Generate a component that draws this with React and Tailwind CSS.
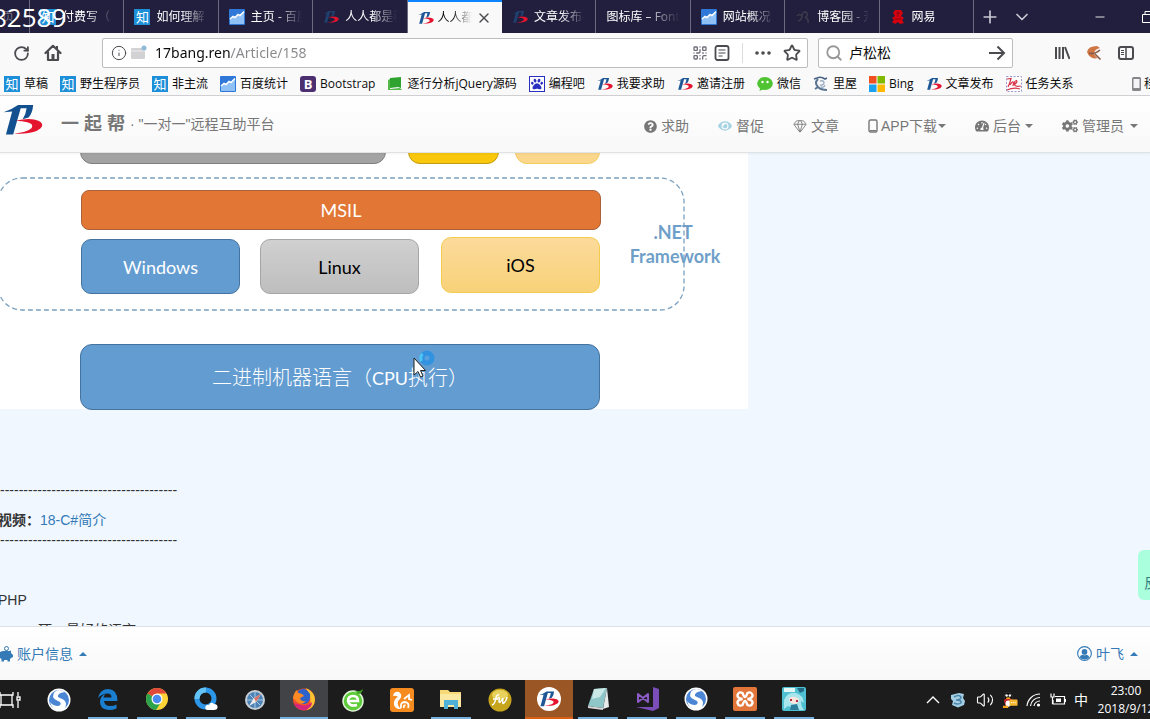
import React from "react";
import {
  RotateCw, Info, Search, ArrowRight, Star, QrCode, Plus, ChevronDown, ChevronUp,
  Minus, X, Smartphone, Gem, Copy, Volume2,
} from "lucide-react";
import {
  FaQuestionCircle, FaEye, FaTachometerAlt, FaCogs, FaPiggyBank, FaRegUserCircle, FaPaw,
} from "react-icons/fa";

/* ---------- site and bookmark icons ---------- */

function BangLogo({ className = "size-4", blue = "#1d5796" }) {
  return (
    <svg viewBox="0 0 122 96" className={className} aria-hidden="true">
      <path fill={blue} d="M2 24 Q26 16 46 2 H92 Q90 28 78 40 L60 46 Q70 30 72 12 H54 L31 92 H9 L28 22Z" />
      <path fill="#e4142f" d="M38 50 Q84 40 108 50 Q128 60 114 74 Q92 93 34 89 Q72 86 86 74 Q96 60 74 55 Q60 51 38 50Z" />
    </svg>
  );
}

function Zhihu() {
  return (
    <span className="flex size-4 shrink-0 items-center justify-center bg-[#1d8fd8] text-[13px] leading-4 text-white" aria-hidden="true">
      知
    </span>
  );
}

function Stats() {
  return (
    <svg viewBox="0 0 16 16" className="size-4 shrink-0" aria-hidden="true">
      <rect width="16" height="16" rx="1" fill="#2f78d8" />
      <path d="M1 10 L4 7.500 L6 8.500 L9 5.500 L11 6.500 L15 2.500 V15 H1Z" fill="#8fc0f5" />
      <path d="M1 10 L4 7.500 L6 8.500 L9 5.500 L11 6.500 L15 2.500" fill="none" stroke="#fff" strokeWidth="1.500" />
    </svg>
  );
}

function BootstrapIcon() {
  return (
    <span className="flex size-4 shrink-0 items-center justify-center rounded-[3px] bg-[#4b2f6f] text-[13px] leading-4 font-bold text-white" aria-hidden="true">
      B
    </span>
  );
}

function GreenBook() {
  return (
    <svg viewBox="0 0 16 16" className="size-4 shrink-0" aria-hidden="true">
      <path d="M3 2 L14 1 V12 L11 11 L3 12Z" fill="#2fa32f" />
      <path d="M1 4 L3 3 V13 L13 12 L15 14 L1 14Z" fill="#54b948" />
    </svg>
  );
}

function Baidu() {
  return (
    <span className="flex size-4 shrink-0 items-center justify-center border border-[#2b2fc0] bg-white text-[#2b2fc0]" aria-hidden="true">
      <FaPaw size={12} />
    </span>
  );
}

function Wechat() {
  return (
    <svg viewBox="0 0 16 16" className="size-4 shrink-0" aria-hidden="true">
      <ellipse cx="8" cy="7.500" rx="7.800" ry="6.500" fill="#4fc332" />
      <path d="M3 12 L2.500 15 L7 13Z" fill="#4fc332" />
      <circle cx="5.500" cy="6" r="1.200" fill="#fff" />
      <circle cx="10.500" cy="6" r="1.200" fill="#fff" />
    </svg>
  );
}

function Liwu() {
  return (
    <svg viewBox="0 0 16 16" className="size-4 shrink-0" fill="none" aria-hidden="true">
      <path d="M1 3 L4 2 Q8 0 12 3 L14 2" stroke="#4a6380" strokeWidth="1.600" />
      <path d="M5 3 Q1 7 5 11 Q8 14 14 14 M2 13 L5 11" stroke="#5a7492" strokeWidth="2" />
      <path d="M7 5 Q11 4 11 7 Q10 10 7 9 M8 11 Q11 12 12 9" stroke="#9db0c4" strokeWidth="1.400" />
    </svg>
  );
}

function Bing() {
  return (
    <svg viewBox="0 0 16 16" className="size-4 shrink-0" aria-hidden="true">
      <rect width="7.500" height="7.500" fill="#f0501f" />
      <rect x="8.500" width="7.500" height="7.500" fill="#7fba00" />
      <rect y="8.500" width="7.500" height="7.500" fill="#1ba1ee" />
      <rect x="8.500" y="8.500" width="7.500" height="7.500" fill="#ffb902" />
    </svg>
  );
}

function Relation() {
  return (
    <svg viewBox="0 0 16 16" className="size-4 shrink-0" aria-hidden="true">
      <rect x="0.500" y="0.500" width="15" height="15" fill="#fff" stroke="#9a9ad0" strokeDasharray="2 1.500" />
      <path d="M1 3 L5 2.500 Q4 7 2 11 M4 9 Q7 4 7.500 7 L7 10 M8 9 Q12 6 10.500 4.500 Q8 5 8.500 9 Q10 11 15 10 M1 14 Q8 11 14 13" fill="none" stroke="#d8364a" strokeWidth="1.200" />
    </svg>
  );
}

function Cnblogs() {
  return (
    <svg viewBox="0 0 16 16" className="size-4 shrink-0" aria-hidden="true">
      <path d="M2 7 Q5 4 7 7 Q7 11 3 12 M7 6 Q9 1 12 4 Q13 8 10 8 Q14 10 13 14" fill="none" stroke="#3d3a4c" strokeWidth="1.600" />
    </svg>
  );
}

function Netease() {
  return (
    <svg viewBox="0 0 16 16" className="size-4 shrink-0" aria-hidden="true">
      <path d="M5 1 H11 L13 4 L11 7 L14 9 L12 11 L14 14 L10 15 L8 13 L5 15 L2 13 L4 11 L2 9 L5 7 L3 4Z" fill="#d7000f" />
      <path d="M6 4 H10 M5 10 H11 M8 2 V8" stroke="#8c0611" fill="none" />
    </svg>
  );
}

const Caret = ({ up = false }) => (
  <svg viewBox="0 0 8 4" className="h-1 w-2 shrink-0" fill="currentColor" aria-hidden="true">
    <path d={up ? "M0 4 L4 0 L8 4Z" : "M0 0 H8 L4 4Z"} />
  </svg>
);

/* ---------- browser chrome ---------- */

const tabs = [
  { icon: <Zhihu />, title: "付费写（" },
  { icon: <Zhihu />, title: "如何理解" },
  { icon: <Stats />, title: "主页 - 百度" },
  { icon: <BangLogo blue="#20406f" />, title: "人人都是程序" },
  { icon: <BangLogo />, title: "人人都是", active: true },
  { icon: <BangLogo blue="#20406f" />, title: "文章发布-一" },
  { icon: null, title: "图标库 – Font A" },
  { icon: <Stats />, title: "网站概况" },
  { icon: <Cnblogs />, title: "博客园 - 开发" },
  { icon: <Netease />, title: "网易" },
];

function TabBar() {
  return (
    <div className="relative flex h-[33px] shrink-0 items-stretch bg-[#211f3d] text-xs text-white">
      <button className="w-[30px] shrink-0 border-r border-[#6b6a80] pl-0.5 text-left text-[#77768a]">页</button>
      <div role="tablist" className="grid w-[944px] shrink-0 grid-cols-10">
        {tabs.map((t, i) =>
          t.active ? (
            <div key={i} className="flex items-center gap-1 border-t-2 border-[#0a84ff] bg-[#f9f9fa] pr-2.5 pl-2.5 text-[#0c0c0d]">
              <button role="tab" aria-selected="true" className="flex min-w-0 flex-1 items-center gap-1">
                <span className="shrink-0">{t.icon}</span>
                <span className="overflow-hidden whitespace-nowrap [mask-image:linear-gradient(90deg,#000_40%,transparent)]">{t.title}</span>
              </button>
              <button aria-label="关闭标签页"><X size={16} strokeWidth={2} className="text-[#4a4a4f]" /></button>
            </div>
          ) : (
            <button key={i} role="tab" aria-selected="false" className="flex min-w-0 items-center gap-1.5 border-r border-[#6b6a80] pr-2.5 pl-2.5">
              {t.icon && <span className="shrink-0">{t.icon}</span>}
              <span className="flex-1 overflow-hidden text-left whitespace-nowrap [mask-image:linear-gradient(90deg,#000_50%,transparent)]">{t.title}</span>
            </button>
          )
        )}
      </div>
      <button aria-label="新标签页" className="flex w-8 shrink-0 items-center justify-center text-[#c9c8d4]"><Plus size={20} strokeWidth={2} /></button>
      <button aria-label="所有标签页" className="flex w-8 shrink-0 items-center justify-center text-[#c9c8d4]"><ChevronDown size={20} /></button>
      <span className="flex-1" />
      <button aria-label="最小化" className="flex w-10 shrink-0 items-center justify-center"><Minus size={14} strokeWidth={1.500} /></button>
      <button aria-label="还原" className="flex w-[30px] shrink-0 items-center justify-end overflow-hidden">
        <svg viewBox="0 0 12 12" className="-mr-1 size-3 shrink-0" fill="none" stroke="currentColor" aria-hidden="true">
          <path d="M0.500 3.500 H8.500 V11.500 H0.500Z M3 3.500 V0.500 H11.500 V9 H8.500" />
        </svg>
      </button>
      <span className="absolute top-0 -left-2 font-['Open_Sans'] text-[26px] leading-[34px]">82589</span>
    </div>
  );
}

function Toolbar() {
  return (
    <div className="flex h-10 shrink-0 items-center bg-[#f9f9fa] text-[#4a4a4f]">
      <button aria-label="刷新" className="ml-[11px] flex size-5 items-center justify-center"><RotateCw size={17} strokeWidth={2.500} /></button>
      <button aria-label="主页" className="ml-3 flex size-5 items-center justify-center">
        <svg viewBox="0 0 18 18" className="size-[18px]" aria-hidden="true">
          <path d="M1.500 9 L9 1.800 L16.500 9 M4 8 V16 H14 V8" fill="none" stroke="currentColor" strokeWidth="2.200" strokeLinejoin="round" strokeLinecap="round" />
          <rect x="7.500" y="10" width="3" height="6" fill="currentColor" />
          <rect x="12" y="2" width="2" height="4" fill="currentColor" />
        </svg>
      </button>
      <div className="ml-[39px] flex h-[30px] min-w-0 flex-1 items-center rounded-xs border border-[#bdbdbf] bg-white pl-2">
        <Info size={16} strokeWidth={1.500} className="shrink-0" />
        <svg viewBox="0 0 16 16" className="ml-1 size-4 shrink-0" aria-hidden="true">
          <rect y="3" width="14" height="11" rx="1" fill="#d2d2d4" />
          <path d="M0 6 H14" stroke="#ececee" />
          <circle cx="13" cy="3" r="2.500" fill="#8dbbd8" />
        </svg>
        <input
          aria-label="地址"
          defaultValue="17bang.ren/Article/158"
          className="ml-2 min-w-0 flex-1 bg-[linear-gradient(90deg,#0c0c0d_75px,#88888b_75px)] bg-clip-text font-['Noto_Sans',sans-serif] text-sm text-transparent outline-none"
        />
        <QrCode size={16} strokeWidth={2} className="shrink-0 text-[#6e6e78]" />
        <svg viewBox="0 0 16 16" className="mx-1.5 size-4 shrink-0" fill="none" stroke="currentColor" aria-hidden="true">
          <rect x="1.500" y="1" width="13" height="14" rx="2" strokeWidth="1.800" />
          <path d="M4.500 5 H11.500 M4.500 8 H11.500 M4.500 11 H8.500" strokeWidth="1.200" />
        </svg>
        <span className="mx-1.5 h-5 w-px bg-[#dcdcde]" />
        <button aria-label="页面操作" className="mx-1.5 flex">
          <svg viewBox="0 0 16 16" className="size-4" fill="currentColor" aria-hidden="true">
            <circle cx="2" cy="8" r="1.800" /><circle cx="8" cy="8" r="1.800" /><circle cx="14" cy="8" r="1.800" />
          </svg>
        </button>
        <button aria-label="收藏" className="mr-1.5 ml-1.5 flex"><Star size={18} strokeWidth={2.400} strokeLinejoin="miter" /></button>
      </div>
      <div className="ml-2.5 flex h-[30px] w-[195px] shrink-0 items-center rounded-xs border border-[#bdbdbf] bg-white px-1.5">
        <Search size={18} strokeWidth={2.400} className="shrink-0 text-[#98989b]" />
        <input aria-label="搜索" defaultValue="卢松松" className="ml-1.5 w-full min-w-0 text-sm text-[#0c0c0d] outline-none" />
        <button aria-label="开始搜索">
          <svg viewBox="0 0 18 16" className="h-4 w-[18px]" fill="none" stroke="currentColor" strokeWidth="2" aria-hidden="true">
            <path d="M1 8 H16 M9.500 1.500 L16 8 L9.500 14.500" />
          </svg>
        </button>
      </div>
      <div className="ml-[41px] flex w-24 shrink-0 items-center gap-4">
        <button aria-label="书库">
          <svg viewBox="0 0 16 16" className="size-4" stroke="currentColor" strokeWidth="2" aria-hidden="true">
            <path d="M2 2 V14 M5.500 2 V14 M9 2 V14 M11 2 L15.500 14" />
          </svg>
        </button>
        <button aria-label="扩展">
          <svg viewBox="0 0 16 16" className="size-4" aria-hidden="true">
            <path d="M1 7 Q2 1 11 1 L14 3 Q9 4 8 8 Q9 12 12 13 Q4 15 1 7Z" fill="#cf7645" />
            <path d="M3 8 Q8 10 14 5 M9 9 L14.500 14.500" stroke="#8b5b45" fill="none" strokeWidth="1.600" />
          </svg>
        </button>
        <button aria-label="侧栏">
          <svg viewBox="0 0 16 14" className="h-3.5 w-4" fill="none" stroke="currentColor" aria-hidden="true">
            <rect x="1" y="1" width="14" height="12" rx="2" strokeWidth="2" />
            <path d="M8 1 V13" strokeWidth="1.500" />
            <path d="M3 4.500 H6 M3 6.500 H6 M3 8.500 H6" />
          </svg>
        </button>
      </div>
    </div>
  );
}

const bookmarks = [
  [<Zhihu />, "草稿"],
  [<Zhihu />, "野生程序员"],
  [<Zhihu />, "非主流"],
  [<Stats />, "百度统计"],
  [<BootstrapIcon />, "Bootstrap"],
  [<GreenBook />, "逐行分析jQuery源码"],
  [<Baidu />, "编程吧"],
  [<BangLogo />, "我要求助"],
  [<BangLogo />, "邀请注册"],
  [<Wechat />, "微信"],
  [<Liwu />, "里屋"],
  [<Bing />, "Bing"],
  [<BangLogo />, "文章发布"],
  [<Relation />, "任务关系"],
];

function Bookmarks() {
  return (
    <div className="flex h-[23px] shrink-0 items-center gap-3 overflow-hidden border-b border-[#d0d0d2] bg-[#f9f9fa] pl-1 text-xs whitespace-nowrap text-[#0c0c0d]">
      {bookmarks.map(([icon, label], i) => (
        <a key={i} href="#" className="flex shrink-0 items-center gap-1">
          {icon}
          {label}
        </a>
      ))}
      <a href="#" className="-mr-[54px] ml-auto flex shrink-0 items-center text-[#0c0c0d]">
        <svg viewBox="0 0 16 16" className="size-4" aria-hidden="true">
          <rect x="4" y="1" width="9" height="14" rx="1.500" fill="#85858a" />
          <rect x="5.500" y="3" width="6" height="9" fill="#f4f4f6" />
        </svg>
        移动版书签
      </a>
    </div>
  );
}

/* ---------- page ---------- */

const Phone = () => (
  <svg viewBox="0 0 10 14" className="mr-0.5 h-3.5 w-2.5" aria-hidden="true">
    <rect x="1" y="1" width="8" height="12" rx="1.500" fill="none" stroke="currentColor" strokeWidth="1.400" />
    <path d="M2 11.500 H8" stroke="currentColor" />
  </svg>
);

const menu = [
  { icon: <FaQuestionCircle size={13} />, label: "求助", gap: "gap-1" },
  { icon: <FaEye size={14} className="text-[#a5d3e4]" />, label: "督促", gap: "gap-1" },
  { icon: <Gem size={14} strokeWidth={1.500} />, label: "文章", gap: "gap-1" },
  { icon: <Phone />, label: "APP下载", caret: true, gap: "gap-px" },
  { icon: <FaTachometerAlt size={14} />, label: "后台", caret: true, gap: "gap-1" },
  { icon: <FaCogs size={16} />, label: "管理员", caret: true, wide: true, gap: "gap-1" },
];

function SiteHeader() {
  return (
    <header className="relative z-10 flex h-[57px] shrink-0 items-center border-b border-[#dfe3e6] bg-linear-to-b from-white to-[#f8f8f8] pr-3 pl-[3px] text-sm whitespace-nowrap text-[#777] shadow-xs">
      <a href="#" className="flex items-center">
        <BangLogo className="mb-2 h-8 w-10" blue="#12508f" />
        <span className="ml-[18px] text-lg font-bold">一 起 帮</span>
      </a>
      <span className="ml-[5px]">· "一对一"远程互助平台</span>
      <nav className="ml-auto flex items-center gap-[29px] pt-1">
        {menu.map((m) => (
          <a key={m.label} href="#" className={"flex items-center " + m.gap}>
            {m.icon}
            <span>{m.label}</span>
            {m.caret && <span className={m.wide ? "ml-0.5" : "ml-0"}><Caret /></span>}
          </a>
        ))}
      </nav>
    </header>
  );
}

const nodes = [
  { label: "", box: "left-[80px] -top-[30px] h-[41px] w-[306px] rounded-xl border-[#7f7f7f] bg-[#a3a3a3]" },
  { label: "", box: "left-[408px] -top-[30px] h-[41px] w-[91px] rounded-xl border-[#c29c10] bg-[#f9c70c]" },
  { label: "", box: "left-[515px] -top-[30px] h-[41px] w-[85px] rounded-xl border-[#f2cd60] bg-[#fbd78d]" },
  { label: "MSIL", box: "left-[81px] top-[37px] h-10 w-[520px] rounded-lg border-[#a9623a] bg-[#e27635] text-white" },
  { label: "Windows", box: "left-[81px] top-[86px] h-[55px] w-[159px] rounded-[10px] border-[#44739f] bg-[#629cd1] text-white" },
  { label: "Linux", box: "left-[260px] top-[86px] h-[55px] w-[159px] rounded-[10px] border-[#a5a5a5] bg-linear-to-b from-[#d0d0d0] to-[#bebebe] text-black" },
  { label: "iOS", box: "left-[441px] top-[84px] h-14 w-[159px] rounded-[10px] border-[#f3cc4d] bg-linear-to-b from-[#fcda9b] to-[#f8d278] text-black" },
  {
    label: <span><span className="font-light">二进制机器语言（</span><span className="text-lg">CPU</span><span className="font-light">执行）</span></span>,
    box: "left-[80px] top-[191px] h-[66px] w-[520px] rounded-xl border-[#44739f] bg-[#629cd1] text-xl text-white",
  },
];

function Diagram() {
  return (
    <div className="relative h-64 w-[748px] bg-white font-[Lato,'Noto_Sans_CJK_SC',sans-serif] text-lg">
      <svg className="absolute top-0 left-0 size-full" aria-hidden="true">
        <rect x="-2" y="25" width="686" height="132" rx="24" fill="none" stroke="#7ba0bd" strokeWidth="1.300" strokeDasharray="5 3" />
      </svg>
      {nodes.map((n, i) => (
        <div key={i} className={"absolute flex items-center justify-center border " + n.box}>{n.label}</div>
      ))}
      <div className="absolute top-[67px] left-[615px] w-[120px] text-center leading-6 font-bold text-[#6f9fc8]">
        .NET&nbsp;<br />Framework
      </div>
      <svg viewBox="0 0 30 34" className="absolute top-[195px] left-[412px] h-[34px] w-[30px]" aria-hidden="true">
        <circle cx="15" cy="10" r="5" fill="#5a9fe0" stroke="#3193e0" strokeWidth="5" />
        <path d="M9.500 13 A6 6 0 0 1 10.500 6" fill="none" stroke="#4cc7f5" strokeWidth="3" />
        <path d="M2 10 V27 L6 23.500 L8.500 29 L11 28 L8.500 22.500 H13.500Z" fill="#fff" stroke="#222" strokeWidth="1" />
      </svg>
    </div>
  );
}

function Article() {
  return (
    <main className="relative min-h-0 flex-1 overflow-hidden bg-[#f0f7ff] text-sm whitespace-nowrap text-[#333]">
      <Diagram />
      <div className="pt-[71px]">
        <p>{"-".repeat(38)}</p>
        <p className="-ml-0.5 pt-2.5"><b>视频：</b><a href="#" className="text-[#337ab7]">18-C#简介</a></p>
        <p>{"-".repeat(38)}</p>
        <p className="-ml-0.5 pt-10">PHP</p>
        <p className="pt-2.5 pl-[38px]">项，最好的语言</p>
      </div>
      <button className="absolute right-0 bottom-[26px] h-[50px] w-3 overflow-hidden rounded-l-md bg-[#aaffdd] pt-4 pl-1.5 text-left text-sm text-[#337a7a]">
        反馈
      </button>
    </main>
  );
}

function AccountBar() {
  return (
    <footer className="flex h-[54px] shrink-0 items-center justify-between border-t border-[#dde1e6] bg-linear-to-b from-white to-[#f8f8f8] pr-3 text-sm text-[#337ab7]">
      <button className="flex items-center gap-1">
        <svg viewBox="0 0 13 16" className="h-4 w-[13px]" aria-hidden="true">
          <circle cx="6.500" cy="2.500" r="2" fill="none" stroke="currentColor" />
          <path d="M0 6 Q4 4 9 5 L11 4.500 V7 L13 9 V11 L11 12 L10 13 V15.500 H7.500 V14 H4 V15.500 H1.500 V13 L0 12Z" fill="currentColor" />
        </svg>
        账户信息<span className="ml-0.5"><Caret up /></span>
      </button>
      <button className="flex items-center gap-1">
        <svg viewBox="0 0 16 16" className="size-[15px]" aria-hidden="true">
          <circle cx="8" cy="8" r="7.300" fill="none" stroke="currentColor" strokeWidth="1.200" />
          <circle cx="8" cy="6.300" r="3" fill="currentColor" />
          <path d="M2.800 12 Q4 9 6 9.300 Q8 10.500 10 9.300 Q12 9 13.200 12 Q11 14.500 8 14.500 Q5 14.500 2.800 12Z" fill="currentColor" />
        </svg>
        叶飞<span className="ml-0.5"><Caret up /></span>
      </button>
    </footer>
  );
}

/* ---------- taskbar ---------- */

const svg = (children) => <svg viewBox="0 0 24 24" className="size-6" aria-hidden="true">{children}</svg>;

const sogou = svg(
  <>
    <circle cx="12" cy="12" r="11.500" fill="#fff" />
    <circle cx="12" cy="12" r="10" fill="#4a86d4" />
    <path d="M18 4 Q12 0 7.500 4 Q4 9 9 12 L13 14 Q15 17 11 18 Q6 18 3 14 Q5 22 12 22.500 Q19 22 19 16 Q19 12 14 10.500 L11 9 Q10 5 18 4Z" fill="#fff" />
  </>
);

const apps = [
  ["任务视图", svg(<path d="M2 4 V7 H15 V4 M2 20 V17 H15 V20 M3 7 V17 M14 7 V17 M20 4 V8 M20 13 V20 M19 9 H22 V12 H19Z" fill="none" stroke="#fff" strokeWidth="1.300" />)],
  ["搜狗浏览器", sogou],
  ["Edge", svg(
    <path d="M2 11 Q4 2 12.500 2 Q21.500 2.500 21.500 14 H8 Q8.500 19 14 19 Q18 19 20.500 17.500 V21.500 Q17 23 13 23 Q4 22.500 4 15 Q4 9 9.500 7 Q7.500 9 7.500 10.500 H15.500 Q15.500 6.500 11.500 6.500 Q6 6.500 2 11Z" fill="#1a7fd0" />
  ), "run"],
  ["Chrome", svg(
    <>
      <circle cx="12" cy="12" r="11" fill="#fdd337" />
      <path d="M12 12 L2.500 6.500 A11 11 0 0 1 21.500 6.500 H12Z" fill="#e0493a" />
      <path d="M12 12 L2.500 6.500 A11 11 0 0 0 11 23 L16.500 14.500Z" fill="#2ba24c" />
      <circle cx="12" cy="12" r="5.500" fill="#fff" />
      <circle cx="12" cy="12" r="4.300" fill="#4a8af4" />
    </>
  ), "run"],
  ["QQ浏览器", svg(
    <>
      <circle cx="11.500" cy="11.500" r="8.500" fill="none" stroke="#2c96e8" strokeWidth="5" />
      <path d="M3 12 A8.500 8.500 0 0 1 12 3" fill="none" stroke="#63c3f5" strokeWidth="5" />
      <path d="M13 23 Q10 22 12 18.500 Q14 17.500 15 18 Q17 14 20 17 Q24 17 23.500 21 Q23 23 20 23Z" fill="#fff" />
    </>
  ), "run"],
  ["Safari", svg(
    <>
      <circle cx="12" cy="12" r="10" fill="#c7cfd6" />
      <circle cx="12" cy="12" r="8" fill="#4c82b5" />
      <path d="M4 12 H20 M12 4 V20 M7 7 L17 17" stroke="#a9c9e2" />
      <path d="M18 6 L13 14 L6 18 L11 10Z" fill="#f2eeee" />
      <path d="M18 6 L13 14 L11 10Z" fill="#d87466" />
    </>
  )],
  ["Firefox", svg(
    <>
      <circle cx="12" cy="12.500" r="11" fill="#f2502a" />
      <path d="M14 1 Q23 5 23 13 Q22 21 15 23 Q20 17 18 10Z" fill="#fdc431" />
      <path d="M2 16 Q5 24 13 23 Q20 21 20 15 Q15 20 9 18Z" fill="#d6247c" />
      <path d="M6 4 Q13 -1 18 7 Q19 15 13 17 Q6 17 7 11Z" fill="#2c62c9" />
      <path d="M1 11 Q2 5 5 3 L6 6 Q10 6 12 9 L8 11 Q9 15 14 14 Q10 19 5 15Z" fill="#fd8a25" />
    </>
  ), "current"],
  ["360浏览器", svg(
    <>
      <circle cx="12" cy="13" r="10" fill="#5dcb3a" stroke="#dff5d6" strokeWidth="1.500" />
      <path d="M7 13 H17 Q17 8 12 8 Q7 8 7 13 Q8 19 16 17" fill="none" stroke="#fff" strokeWidth="2.500" />
      <path d="M14 3 Q19 4 22 1 Q21 6 17 6Z" fill="#3aa31d" />
    </>
  )],
  ["UC浏览器", svg(
    <>
      <rect width="24" height="24" rx="3" fill="#f68b1f" />
      <path d="M3 8 Q4 3 9 4 Q13 7 10 11 Q7 13 8 17 Q9 20 12 21 H8 Q3 19 4 14 Q5 10 8 9 Q6 7 3 8Z" fill="#fff" />
      <path d="M11 20 Q10 14 15 14 Q20 15 18 20 M14 20 Q13 17 15.500 17.500 M14 11 L19 7 V11 L22 12" fill="none" stroke="#fff" strokeWidth="1.800" />
    </>
  )],
  ["文件资源管理器", svg(
    <>
      <path d="M1 3 H9 L11 5 H22 V20 H1Z" fill="#f7d978" />
      <path d="M1 7 H22 V20 H1Z" fill="#fbe9a2" />
      <path d="M5 13 H19 V22 H15 V18 H9 V22 H5Z" fill="#4fb0d8" />
    </>
  ), "run"],
  ["翻译", svg(
    <>
      <circle cx="12" cy="12" r="11.500" fill="#c6a51c" />
      <ellipse cx="12" cy="7" rx="8" ry="5" fill="#e8d15c" />
      <path d="M4 17 Q7 16 8 10 Q9 6 11 7 M5 11 H10 M10 10 Q12 8 11 13 Q11 17 15 10 Q14 17 16 15 Q19 12 19 9" fill="none" stroke="#fff" strokeWidth="1.500" />
    </>
  )],
  ["一起帮", <span className="flex size-6 items-center justify-center rounded-full bg-white"><BangLogo className="h-4 w-5" /></span>, "alert"],
  ["记事本", svg(
    <>
      <path d="M8 2 L21 1 L17 21 L2 19Z" fill="#8fc6c8" />
      <path d="M8 2 L20 1 L14 10 L6 12Z" fill="#c9e8e6" />
      <path d="M21 1 L23 20 L17 22Z" fill="#e7eceb" />
      <path d="M2 19 L17 21 V23 L2 21Z" fill="#d8d8d8" />
    </>
  ), "run"],
  ["Visual Studio", svg(
    <>
      <path d="M18 0 L24 2 V21 L18 24 L1 20 L18 20Z" fill="#7a4db8" />
      <path d="M3 7 V15 L13 7 V15Z" fill="none" stroke="#8b5cc6" strokeWidth="2" strokeLinejoin="round" />
    </>
  ), "run"],
  ["搜狗", sogou, "run"],
  ["XAMPP", svg(
    <>
      <rect width="24" height="24" rx="2" fill="#e2753a" />
      <path d="M9.500 12 Q4 11 4.500 8 Q6 4 9.500 6 Q11 10 12 10 Q13 10 14.500 6 Q18 4 19.500 8 Q20 11 14.500 12 Q20 13 19.500 16 Q18 20 14.500 18 Q13 14 12 14 Q11 14 9.500 18 Q6 20 4.500 16 Q4 13 9.500 12Z" fill="none" stroke="#fff" strokeWidth="2.400" />
    </>
  ), "run"],
  ["游戏", svg(
    <>
      <rect width="24" height="24" rx="2" fill="#4fbfd2" />
      <path d="M2 1 H13 V5 H2Z" fill="#e3f6f8" />
      <path d="M15 1 H22 V4 L18 6Z" fill="#246a86" />
      <path d="M2 13 Q6 4 14 6 Q21 8 22 16 L19 14 Q19 20 22 23 H15 L6 19 L2 22Z" fill="#a8e6ee" />
      <path d="M7 11 Q12 8 17 12 Q17 17 12 17 Q7 16 7 11Z" fill="#fbe6de" />
      <path d="M8 13 H10 M14 14 H16" stroke="#b2304a" strokeWidth="1.800" />
      <path d="M9 18 L15 17 L17 23 H8Z" fill="#2c7d9c" />
    </>
  ), "run"],
];

const cellStyle = {
  current: "bg-[#414346] border-b-2 border-[#76b0de]",
  alert: "bg-[#9b5626] border-b-2 border-[#d95f14]",
};

function Taskbar() {
  return (
    <div className="flex h-[39px] shrink-0 items-stretch overflow-hidden bg-[#1c1c1d] text-white">
      <div className="-ml-3.5 flex shrink-0 gap-px">
        {apps.map(([name, icon, state], i) => (
          <button key={i} aria-label={name} className={"flex w-12 flex-col items-center " + (cellStyle[state] || "")}>
            <span className="flex flex-1 items-center justify-center">{icon}</span>
            {state === "run" && <span className="h-0.5 w-10 bg-[#76b0de]" />}
          </button>
        ))}
      </div>
      <div className="ml-auto flex shrink-0 items-center gap-2">
        <svg viewBox="0 0 14 14" className="size-3.5" fill="none" stroke="currentColor" strokeWidth="1.400" aria-hidden="true">
          <path d="M1 10 L7 4 L13 10" />
        </svg>
        <svg viewBox="0 0 16 16" className="mx-0.5 size-4" aria-hidden="true">
          <path d="M1 3 L9 1 L14 2 L13 6 L15 9 L14 13 L8 15.500 L2 13 L3 9 L1 7Z" fill="#a4cfe4" />
          <path d="M4 5 Q9 2 11 5 Q11 8 6 8 Q12 8 11 11 Q8 13 4 11" fill="none" stroke="#4b86a8" strokeWidth="1.500" />
        </svg>
        <Volume2 size={18} strokeWidth={1.500} />
        <svg viewBox="0 0 18 18" className="size-4" aria-hidden="true">
          <ellipse cx="7" cy="5.500" rx="4.500" ry="5" fill="#0a0a0a" stroke="#4d4d4d" strokeWidth="0.600" />
          <path d="M2 9 Q7 5 13 9 L14 13 H10 L8 16 H4Z" fill="#c3272b" />
          <ellipse cx="7" cy="13" rx="3" ry="3.500" fill="#fff" />
          <circle cx="5.200" cy="4" r="1.400" fill="#fff" /><circle cx="8.800" cy="4" r="1.400" fill="#fff" />
          <ellipse cx="7" cy="7" rx="2.500" ry="1" fill="#f2a31b" />
          <path d="M1 15.500 H7 V18 H1Z" fill="#f2a31b" />
          <rect x="8.500" y="8.500" width="9" height="7" rx="1" fill="#f6b82e" />
          <path d="M10 12 H16" stroke="#fff" strokeDasharray="1.500 1" />
        </svg>
        <svg viewBox="0 0 16 16" className="size-4" fill="none" stroke="#fff" strokeWidth="1.200" aria-hidden="true">
          <path d="M1 14 A13 13 0 0 1 14 2 M4.500 14 A9.500 9.500 0 0 1 14 5.500 M8 14 A6 6 0 0 1 14 9" />
          <circle cx="12.500" cy="13" r="1" fill="#fff" />
        </svg>
        <svg viewBox="0 0 16 16" className="size-4" fill="none" stroke="#fff" strokeWidth="1.200" aria-hidden="true">
          <path d="M5 4.500 H14.500 V12 H3 V8 M15.500 7 V10 M1 1.500 V5 H4 V1.500 M2.500 5 V12" />
          <rect x="6" y="6.500" width="5" height="3.500" fill="#fff" stroke="none" />
        </svg>
        <span className="text-sm">中</span>
        <div className="-mr-1.5 w-[60px] text-center text-xs leading-[18px] whitespace-nowrap">
          <div>23:00</div>
          <div>2018/9/12</div>
        </div>
      </div>
    </div>
  );
}

export default function App() {
  return (
    <div className="flex h-screen flex-col overflow-hidden font-['Open_Sans','Noto_Sans_CJK_SC',sans-serif]">
      <TabBar />
      <Toolbar />
      <Bookmarks />
      <div className="flex min-h-0 flex-1 flex-col font-['Liberation_Sans','Noto_Sans_CJK_SC',sans-serif]">
        <SiteHeader />
        <Article />
        <AccountBar />
      </div>
      <Taskbar />
    </div>
  );
}
